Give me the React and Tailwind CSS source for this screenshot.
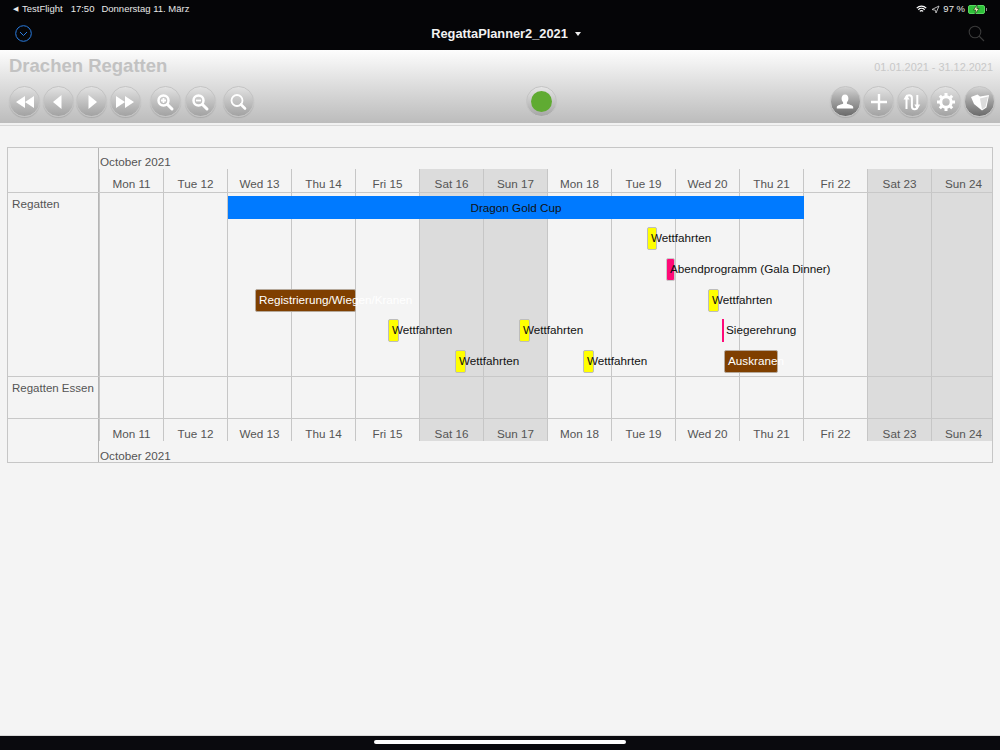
import React from 'react';

const font = { fontFamily: '"Liberation Sans", Arial, sans-serif' };

const days = [
  { label: 'Mon 11' },
  { label: 'Tue 12' },
  { label: 'Wed 13' },
  { label: 'Thu 14' },
  { label: 'Fri 15' },
  { label: 'Sat 16', weekend: true },
  { label: 'Sun 17', weekend: true },
  { label: 'Mon 18' },
  { label: 'Tue 19' },
  { label: 'Wed 20' },
  { label: 'Thu 21' },
  { label: 'Fri 22' },
  { label: 'Sat 23', weekend: true },
  { label: 'Sun 24', weekend: true },
];

// left/top are relative to the Regatten row, which is a free canvas for the bars
const events = [
  { left: 548, top: 34, width: 10, color: 'yellow', text: 'Wettfahrten' },
  { left: 567, top: 65, width: 9, color: 'pink', text: 'Abendprogramm (Gala Dinner)' },
  { left: 156, top: 96, width: 101, color: 'brown', text: 'Registrierung/Wiegen/Kranen' },
  { left: 609, top: 96, width: 11, color: 'yellow', text: 'Wettfahrten' },
  { left: 289, top: 126, width: 11, color: 'yellow', text: 'Wettfahrten' },
  { left: 420, top: 126, width: 11, color: 'yellow', text: 'Wettfahrten' },
  { left: 623, top: 126, width: 2, color: 'thin', text: 'Siegerehrung' },
  { left: 356, top: 157, width: 11, color: 'yellow', text: 'Wettfahrten' },
  { left: 484, top: 157, width: 11, color: 'yellow', text: 'Wettfahrten' },
  { left: 625, top: 157, width: 54, color: 'brown', text: 'Auskranen' },
];

function GlossButton({ dark, children }) {
  return (
    <div
      className={`w-[31px] h-[31px] rounded-full border border-[#c4c4c4] flex items-center justify-center shadow-[0_1px_1px_rgba(0,0,0,0.12)] ${
        dark
          ? 'bg-gradient-to-b from-[#d4d4d4] to-[#6a6a6a]'
          : 'bg-gradient-to-b from-[#e2e2e2] to-[#a2a2a2]'
      }`}
    >
      <svg width="24" height="24" viewBox="0 0 24 24" fill="white">
        {children}
      </svg>
    </div>
  );
}

function ToolbarLeft() {
  return (
    <div className="flex items-center">
      <div className="flex gap-[2.600px]">
        <GlossButton>
          <path d="M12 6v12l-9-6zM21 6v12l-9-6z" />
        </GlossButton>
        <GlossButton>
          <path d="M15.500 5v14l-8.500-7z" />
        </GlossButton>
        <GlossButton>
          <path d="M8.500 5v14l8.500-7z" />
        </GlossButton>
        <GlossButton>
          <path d="M3 6v12l9-6zM12 6v12l9-6z" />
        </GlossButton>
      </div>
      <div className="ml-[9px]">
        <GlossButton>
          <circle cx="10.500" cy="10.500" r="5" fill="none" stroke="white" strokeWidth="2.500" />
          <path d="M14.500 14.500l4.500 4.500" stroke="white" strokeWidth="3" strokeLinecap="round" />
          <path d="M8 10.500h5M10.500 8v5" stroke="white" strokeWidth="1.800" />
        </GlossButton>
      </div>
      <div className="ml-[4px]">
        <GlossButton>
          <circle cx="10.500" cy="10.500" r="5" fill="none" stroke="white" strokeWidth="2.500" />
          <path d="M14.500 14.500l4.500 4.500" stroke="white" strokeWidth="3" strokeLinecap="round" />
          <path d="M8 10.500h5" stroke="white" strokeWidth="1.800" />
        </GlossButton>
      </div>
      <div className="ml-[7px]">
        <GlossButton>
          <circle cx="11" cy="10.500" r="5.500" fill="none" stroke="white" strokeWidth="1.800" />
          <path d="M15 14.500l4 4" stroke="white" strokeWidth="2.600" strokeLinecap="round" />
        </GlossButton>
      </div>
    </div>
  );
}

function ToolbarRight() {
  return (
    <div className="flex gap-[2.600px]">
      <GlossButton dark>
        <path d="M12 4.500c-2.400 0-3.400 1.900-3.400 4 0 1.700.7 3 1.500 3.800v1.500c-1.600.8-5.800 1.200-6.300 3.200v1.500h16.400V17c-.5-2-4.700-2.400-6.300-3.200v-1.500c.8-.8 1.500-2.100 1.500-3.800 0-2.100-1-4-3.400-4z" />
      </GlossButton>
      <GlossButton>
        <path d="M4 12h16M12 4v16" stroke="white" strokeWidth="2.400" />
      </GlossButton>
      <GlossButton>
        <path
          d="M6.500 19V8a2.700 2.700 0 0 1 5.400 0v8.500a2.700 2.700 0 0 0 5.400 0V5"
          fill="none"
          stroke="white"
          strokeWidth="2"
        />
        <path d="M3.500 9.500l3-5 3 5zM14.300 14.500l3 5 3-5z" />
      </GlossButton>
      <GlossButton>
        <circle cx="12" cy="12" r="5.200" fill="none" stroke="white" strokeWidth="3" />
        <path
          d="M12 3v3.500M12 17.500V21M3 12h3.500M17.500 12H21M5.800 5.800l2.500 2.500M15.700 15.700l2.500 2.500M18.200 5.800l-2.500 2.500M8.300 15.700l-2.500 2.500"
          stroke="white"
          strokeWidth="3"
        />
      </GlossButton>
      <GlossButton dark>
        <path d="M3 7l6.500-2.500L12 6.500l9-1.500-2.500 12.500-4.500 3L6 14z" />
        <path d="M12 8.500l8-2-2.500 10.500-3.500 2.500z" fill="#dcdcdc" />
      </GlossButton>
    </div>
  );
}

function DayCells({ height }) {
  return days.map((day) => (
    <div
      key={day.label}
      className={`border-l border-[#c6c6c6] ${height} ${day.weekend ? 'bg-[#dcdcdc]' : ''}`}
    />
  ));
}

function DayHeader({ top }) {
  return (
    <div className={`grid grid-cols-[repeat(14,64px)] ${top ? 'h-[23px]' : 'h-[22px]'}`}>
      {days.map((day) => (
        <div
          key={day.label}
          className={`border-l border-[#c6c6c6] flex items-end justify-center text-[11.700px] leading-[14px] text-[#555] ${
            top ? 'pb-[1px]' : ''
          } ${day.weekend ? 'bg-[#dcdcdc]' : ''}`}
        >
          {day.label}
        </div>
      ))}
    </div>
  );
}

function EventBar({ event }) {
  const colors = {
    yellow: 'bg-[#ffff00] rounded-[2px] border border-[#bdbdbd]',
    pink: 'bg-[#ff0a78] rounded-[2px] border border-[#c9c9c9]',
    thin: 'bg-[#ff0a78]',
    brown: 'bg-[#7f3f00] rounded-[2px] border border-[#b5a89a]',
  };
  return (
    <div className="absolute h-[23px]" style={{ left: event.left, top: event.top, width: event.width }}>
      <div className={`h-full ${colors[event.color]}`} />
      <span
        className={`absolute left-[4px] top-[3px] text-[11.700px] leading-[15px] whitespace-nowrap ${
          event.color === 'brown' ? 'text-white' : 'text-[#111]'
        }`}
      >
        {event.text}
      </span>
    </div>
  );
}

export default function App() {
  return (
    <div className="w-[1000px] h-[750px] flex flex-col overflow-hidden bg-[#f4f4f4]" style={font}>
      {/* ipad status bar + app title */}
      <div className="bg-[#050507] h-[50px] shrink-0 text-white">
        <div className="h-[18px] px-[13px] flex items-center justify-between text-[9.500px] text-[#e8e8e8]">
          <div className="flex items-center">
            <span className="text-[7px] mr-[4px]">◀</span>
            <span>TestFlight</span>
            <span className="ml-[8px]">17:50</span>
            <span className="ml-[7px]">Donnerstag 11. März</span>
          </div>
          <div className="flex items-center">
            <svg width="11" height="9" viewBox="0 0 12 9" fill="none" stroke="white">
              <path d="M.8 3a7.500 7.500 0 0 1 10.400 0M2.500 4.800a5 5 0 0 1 7 0M4.200 6.500a2.500 2.500 0 0 1 3.600 0" strokeWidth="1.300" />
            </svg>
            <svg className="ml-[4px]" width="9" height="9" viewBox="0 0 9 9" fill="none" stroke="#ccc">
              <path d="M8 1L1 4.500l3.500.8L5 8z" strokeWidth="0.900" />
            </svg>
            <span className="ml-[3px]">97 %</span>
            <div className="ml-[3px] w-[17px] h-[9px] rounded-[2px] bg-[#2fc13a] border border-[#58d860] flex items-center justify-center">
              <svg width="7" height="9" viewBox="0 0 7 9" fill="#f4f4c0">
                <path d="M4 0L.5 5h2.200L2 9l4-5.500H3.800z" stroke="black" strokeWidth="0.500" />
              </svg>
            </div>
            <div className="w-[1px] h-[3px] ml-[1px] bg-[#888]" />
          </div>
        </div>
        <div className="h-[32px] relative flex items-center justify-center pl-[12px]">
          <svg className="absolute left-[15px] top-[7px]" width="17" height="17" viewBox="0 0 17 17" fill="none" stroke="#2a7de1">
            <circle cx="8.500" cy="8.500" r="7.800" strokeWidth="1" />
            <path d="M5 7l3.500 3.500L12 7" strokeWidth="1" />
          </svg>
          <span className="text-[12.800px] font-bold text-[#f2f2f2]">RegattaPlanner2_2021</span>
          <span className="ml-[7px] w-0 h-0 border-l-[3px] border-r-[3px] border-t-[4px] border-l-transparent border-r-transparent border-t-[#eee]" />
          <svg className="absolute right-[15px] top-[7px]" width="17" height="17" viewBox="0 0 17 17" fill="none" stroke="#3a3a3a">
            <circle cx="7" cy="7" r="5.800" strokeWidth="1.100" />
            <path d="M11 11l5 5" strokeWidth="1.100" />
          </svg>
        </div>
      </div>

      {/* toolbar */}
      <div className="h-[73px] shrink-0 bg-gradient-to-b from-[#fdfdfd] to-[#bcbcbc] pl-[9px] pr-[5px] pt-[5px]">
        <div className="flex justify-between items-center h-[21px]">
          <span className="text-[18.500px] font-bold text-[#c2c2c2] leading-[21px]">Drachen Regatten</span>
          <span className="text-[10.900px] text-[#c8c8c8] pr-[2px] mt-[4px]">01.01.2021 - 31.12.2021</span>
        </div>
        <div className="flex items-center justify-between mt-[10px] h-[31px]">
          <ToolbarLeft />
          <div className="w-[31px] h-[31px] rounded-full bg-gradient-to-b from-[#e6e6e6] to-[#a6a6a6] border border-[#c4c4c4] flex items-center justify-center">
            <div className="w-[21px] h-[21px] rounded-full bg-[#60ab32]" />
          </div>
          <ToolbarRight />
        </div>
      </div>
      <div className="h-[3px] shrink-0 bg-[#f1f1f1] border-b border-[#d8d8d8]" />

      {/* gantt */}
      <div className="flex-1 pl-[7px] pt-[21px]">
        <div className="w-[986px] border border-[#c6c6c6] text-[#555] text-[11.700px] overflow-hidden">
          <div className="flex h-[45px] border-b border-[#c8c8c8]">
            <div className="w-[91px] shrink-0 border-r border-[#b5b5b5]" />
            <div className="flex flex-col">
              <div className="h-[21px] pt-[7px] pl-[1px] leading-[14px]">October 2021</div>
              <DayHeader top />
            </div>
          </div>

          <div className="flex h-[184px] border-b border-[#c8c8c8]">
            <div className="w-[91px] shrink-0 border-r border-[#b5b5b5] pl-[4px] pt-[4px] leading-[14px]">Regatten</div>
            <div className="relative">
              <div className="grid grid-cols-[repeat(14,64px)]">
                <DayCells height="h-[183px]" />
              </div>
              <div className="absolute left-[129px] top-[3px] w-[576px] h-[23px] bg-[#007aff] flex items-center justify-center text-[11.700px] text-[#111]">
                Dragon Gold Cup
              </div>
              {events.map((event) => (
                <EventBar key={event.left + '-' + event.top} event={event} />
              ))}
            </div>
          </div>

          <div className="flex h-[42px] border-b border-[#c8c8c8]">
            <div className="w-[91px] shrink-0 border-r border-[#b5b5b5] pl-[4px] pt-[4px] leading-[14px] text-[11.500px] whitespace-nowrap">Regatten Essen</div>
            <div className="grid grid-cols-[repeat(14,64px)]">
              <DayCells height="h-[41px]" />
            </div>
          </div>

          <div className="flex h-[43px]">
            <div className="w-[91px] shrink-0 border-r border-[#b5b5b5]" />
            <div className="flex flex-col">
              <DayHeader />
              <div className="h-[21px] pt-[8px] pl-[1px] leading-[14px]">October 2021</div>
            </div>
          </div>
        </div>
      </div>

      {/* home indicator */}
      <div className="h-[15px] shrink-0 bg-[#0a0a0e] border-t border-[#d8d8d8] flex justify-center pt-[4px]">
        <div className="w-[252px] h-[4px] rounded-full bg-white" />
      </div>
    </div>
  );
}
